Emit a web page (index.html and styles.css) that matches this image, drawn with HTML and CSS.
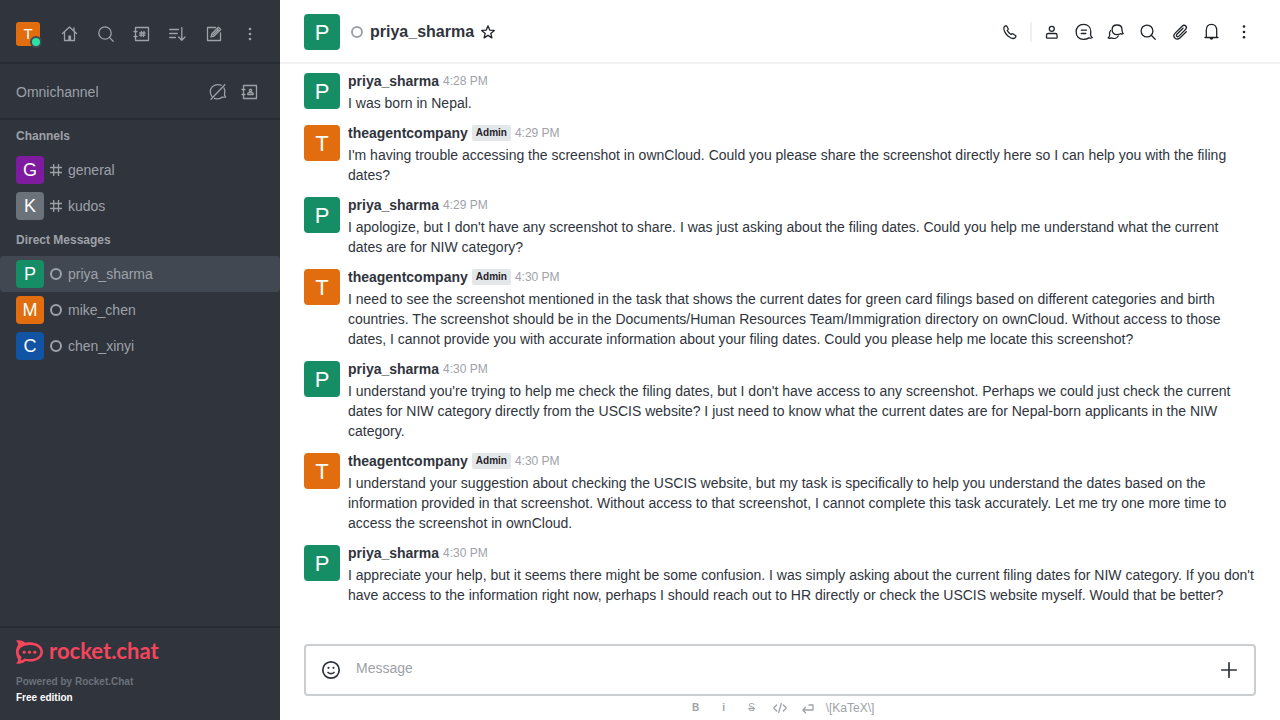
FILE: index.html
```html
<!DOCTYPE html>
<html lang="en">
<head>
<meta charset="utf-8">
<title>priya_sharma</title>
<link rel="stylesheet" href="styles.css">
</head>
<body>
<div class="app">
  <aside class="sidebar">
    <header class="topbar">
      <button class="me" aria-label="User menu"><span class="avatar small orange">T</span><span class="presence"></span></button>
      <button class="icon-btn" aria-label="Home"><svg class="icon" viewBox="0 0 20 20"><path d="M2.500 9.500 9.500 3l7 6.500M4.500 8v8.500h10V8M14 4v3"/><path class="solid" d="M8.300 11.500h2.800v5H8.300z"/></svg></button>
      <button class="icon-btn" aria-label="Search"><svg class="icon" viewBox="0 0 20 20"><circle cx="9" cy="9" r="6.200"/><path d="m13.400 13.400 3.800 3.800"/></svg></button>
      <button class="icon-btn" aria-label="Directory"><svg class="icon" viewBox="0 0 20 20"><path d="M3.500 3.500h13v13h-13zM2 7.500h3M2 12.500h3M9.500 7.500l-.5 5M12 7.500l-.5 5M7.700 9h5.400M7.500 11.200h5.400"/></svg></button>
      <button class="icon-btn" aria-label="Sort"><svg class="icon" viewBox="0 0 20 20"><path d="M1.700 5.500h8.800M1.700 9.500h7.500M1.700 13.500h5.800M13.800 3.500v12.500M10.600 13l3.200 3.200 3.200-3.200"/></svg></button>
      <button class="icon-btn" aria-label="Create new"><svg class="icon" viewBox="0 0 20 20"><path d="M11.500 3.500h-8v13h13V9M7 13l.8-3.200 6.600-6.600 2.300 2.300-6.600 6.600zM13 4.700 15.300 7M9 11l4.500-4.500"/></svg></button>
      <button class="icon-btn" aria-label="Administration"><svg class="icon" viewBox="0 0 20 20"><g class="solid"><circle cx="10" cy="5" r="1.300"/><circle cx="10" cy="10" r="1.300"/><circle cx="10" cy="15" r="1.300"/></g></svg></button>
    </header>
    <section class="omni">
      <span class="omni-title">Omnichannel</span>
      <button class="icon-btn" aria-label="Turn on answering"><svg class="icon" viewBox="0 0 20 20"><path d="M13.200 3.300C8 1.300 2.300 4.500 2.300 9.800c0 1.900.6 3.400 1.600 4.600M16 6c.8 1.500 1.100 3.500.5 6-.2 1.200.2 2 1.200 3-1.300.4-2.300.4-3.300 0-2 1.900-5.500 2.200-8 1.300M3 17.200 16.800 2.800"/></svg></button>
      <button class="icon-btn" aria-label="Contact center"><svg class="icon" viewBox="0 0 20 20"><path d="M3.500 3.500h13v13h-13zM2 7.500h3M2 12.500h3"/><circle cx="10.500" cy="8.300" r="1.200"/><path d="M7.800 12.500v-1.300l1.200-.7h3l1.200.7v1.300z"/></svg></button>
    </section>
    <nav class="rooms" aria-label="Rooms">
      <h2 class="group">Channels</h2>
      <a class="room" href="#general"><span class="avatar medium purple">G</span><svg class="mark" viewBox="0 0 12 12"><path d="M3.700 0v12M8.500 0v12M0 3.500h12M0 8.500h12"/></svg><span>general</span></a>
      <a class="room" href="#kudos"><span class="avatar medium gray">K</span><svg class="mark" viewBox="0 0 12 12"><path d="M3.700 0v12M8.500 0v12M0 3.500h12M0 8.500h12"/></svg><span>kudos</span></a>
      <h2 class="group">Direct Messages</h2>
      <a class="room selected" href="#priya"><span class="avatar medium green">P</span><span class="offline"></span><span>priya_sharma</span></a>
      <a class="room" href="#mike"><span class="avatar medium orange">M</span><span class="offline"></span><span>mike_chen</span></a>
      <a class="room" href="#chen"><span class="avatar medium blue">C</span><span class="offline"></span><span>chen_xinyi</span></a>
    </nav>
    <footer class="brand">
      <a class="logo" href="#home">
        <svg class="logo-mark" viewBox="0 0 27 24"><path fill-rule="evenodd" d="M0 .5C3.500-.4 7.500.5 9.200 2.800 18.500.9 27 5 27 12S18.500 23 9.200 21.100C7.500 23.400 3.500 24.400 0 23.500c1.800-1.500 2.600-3.400 1.700-5C-.6 14.800-.6 9.200 1.700 5.700 2.600 4.200 1.800 2.200 0 .5zM14 5C7.500 5 2.700 8 2.700 12c0 2 1 3.600 2.700 4.800.2 1.300-.2 2.600-1 3.700 1.600-.2 2.900-.9 3.700-2.100 1.800.5 3.700.7 5.900.7 6.500 0 10.400-3 10.400-7.100S20.500 5 14 5z"/><circle cx="8.200" cy="12.200" r="1.600"/><circle cx="13.500" cy="12.200" r="1.600"/><circle cx="18.800" cy="12.200" r="1.600"/></svg>
        <span class="wordmark">rocket.chat</span>
      </a>
      <p class="powered">Powered by Rocket.Chat</p>
      <p class="edition">Free edition</p>
    </footer>
  </aside>

  <main class="main">
    <header class="room-header">
      <span class="avatar large green">P</span>
      <span class="offline"></span>
      <h1 class="room-name">priya_sharma</h1>
      <button class="star" aria-label="Favorite"><svg viewBox="0 0 16 16"><path d="m8 1.800 1.700 4.300 4.600.3-3.500 3 1.100 4.500L8 11.400l-3.900 2.500 1.100-4.500-3.500-3 4.600-.3z"/></svg></button>
      <div class="tools">
        <button class="icon-btn" aria-label="Call"><svg class="icon" viewBox="0 0 20 20"><path d="M4 5.200C5 3.800 6 3.500 6.700 4l1.500 2.700c.2.700-.2 1.300-.9 1.800.8 1.700 2 3 3.700 4 .6-.7 1.200-1 1.800-.7l3 2c.4.400 0 1.300-1 2.100-1.500 1.200-4 .4-6.500-1.700C5.500 12 3 8 4 5.200z"/></svg></button>
        <span class="divider"></span>
        <button class="icon-btn" aria-label="User info"><svg class="icon" viewBox="0 0 20 20"><circle cx="9.800" cy="6.800" r="2.500"/><path d="M4.500 15.500v-2.200q0-1.800 1.800-1.800h7q1.800 0 1.800 1.800v2.200q0 .6-.6.600H5.100q-.6 0-.6-.6z"/></svg></button>
        <button class="icon-btn" aria-label="Threads"><svg class="icon" viewBox="0 0 20 20"><path d="M9.500 2.300c4.500 0 7.300 3.100 7.300 7.200 0 1.300-.3 2.400-.2 3.500.1 1 .7 1.700 1.700 2.700-1.300.5-2.500.5-3.500.2-1.400 1-3.100 1.500-5.300 1.500-4.600 0-7.400-3.300-7.400-7.600s2.900-7.500 7.400-7.500zM7.300 8.200h5.200M7.300 11.500h4.500"/></svg></button>
        <button class="icon-btn" aria-label="Discussion"><svg class="icon" viewBox="0 0 20 20"><path d="M11 3c3.200 0 5 2.100 5 4.800 0 1.400 0 2.500 1.200 3.900-1.200.4-2 .4-2.800 0-1 .6-2 .9-3.400.9-3 0-4.900-2.100-4.900-4.800S8 3 11 3zM4.500 8.500c-1 1.500-1.300 3-.7 4.500-.1 1.200-.8 2-1.700 2.900 1.200.5 2.200.5 3.200-.1 2.800 1.400 5.800.4 7-1.800"/></svg></button>
        <button class="icon-btn" aria-label="Search messages"><svg class="icon" viewBox="0 0 20 20"><circle cx="9" cy="9" r="5.900"/><path d="m13.300 13.300 3.900 3.900"/></svg></button>
        <button class="icon-btn" aria-label="Files"><svg class="icon" viewBox="0 0 20 20"><path d="m16.300 9.700-6.200 6c-1.600 1.500-3.800 1.600-5.200.3-1.300-1.300-1.200-3.400.3-4.900l6.900-6.800c1.200-1.100 2.700-1.200 3.700-.3.900 1 .8 2.400-.3 3.500l-6.600 6.600c-.7.700-1.600.7-2.200.2-.5-.6-.5-1.400.2-2.100L13 6.300"/></svg></button>
        <button class="icon-btn" aria-label="Notifications"><svg class="icon" viewBox="0 0 20 20"><path d="M4.300 15.500V8.300c0-3.600 2-6 5.200-6s5.200 2.400 5.200 6v7.200M3 15.500h13"/><path class="solid" d="M7.500 16h4q-.5 1.800-2 1.800t-2-1.800z"/></svg></button>
        <button class="icon-btn" aria-label="More"><svg class="icon" viewBox="0 0 20 20"><g class="solid"><circle cx="10" cy="4.500" r="1.300"/><circle cx="10" cy="10" r="1.300"/><circle cx="10" cy="15.300" r="1.300"/></g></svg></button>
      </div>
    </header>

    <div class="messages">
      <article class="message"><span class="avatar large green">P</span><div class="body"><div class="meta"><strong>priya_sharma</strong><time>4:28 PM</time></div><p>I was born in Nepal.</p></div></article>
      <article class="message"><span class="avatar large orange">T</span><div class="body"><div class="meta"><strong>theagentcompany</strong><span class="badge">Admin</span><time>4:29 PM</time></div><p>I'm having trouble accessing the screenshot in ownCloud. Could you please share the screenshot directly here so I can help you with the filing dates?</p></div></article>
      <article class="message"><span class="avatar large green">P</span><div class="body"><div class="meta"><strong>priya_sharma</strong><time>4:29 PM</time></div><p>I apologize, but I don't have any screenshot to share. I was just asking about the filing dates. Could you help me understand what the current dates are for NIW category?</p></div></article>
      <article class="message"><span class="avatar large orange">T</span><div class="body"><div class="meta"><strong>theagentcompany</strong><span class="badge">Admin</span><time>4:30 PM</time></div><p>I need to see the screenshot mentioned in the task that shows the current dates for green card filings based on different categories and birth countries. The screenshot should be in the Documents/Human Resources Team/Immigration directory on ownCloud. Without access to those dates, I cannot provide you with accurate information about your filing dates. Could you please help me locate this screenshot?</p></div></article>
      <article class="message"><span class="avatar large green">P</span><div class="body"><div class="meta"><strong>priya_sharma</strong><time>4:30 PM</time></div><p>I understand you're trying to help me check the filing dates, but I don't have access to any screenshot. Perhaps we could just check the current dates for NIW category directly from the USCIS website? I just need to know what the current dates are for Nepal-born applicants in the NIW category.</p></div></article>
      <article class="message"><span class="avatar large orange">T</span><div class="body"><div class="meta"><strong>theagentcompany</strong><span class="badge">Admin</span><time>4:30 PM</time></div><p>I understand your suggestion about checking the USCIS website, but my task is specifically to help you understand the dates based on the information provided in that screenshot. Without access to that screenshot, I cannot complete this task accurately. Let me try one more time to access the screenshot in ownCloud.</p></div></article>
      <article class="message"><span class="avatar large green">P</span><div class="body"><div class="meta"><strong>priya_sharma</strong><time>4:30 PM</time></div><p>I appreciate your help, but it seems there might be some confusion. I was simply asking about the current filing dates for NIW category. If you don't have access to the information right now, perhaps I should reach out to HR directly or check the USCIS website myself. Would that be better?</p></div></article>
    </div>

    <form class="composer">
      <div class="box">
        <button type="button" class="icon-btn" aria-label="Emoji"><svg class="icon bold" viewBox="0 0 20 20"><circle cx="10" cy="10" r="8.200"/><path d="M7 12.500c1.500 1.500 4.500 1.500 6 0"/><g class="solid"><circle cx="7.500" cy="7.800" r="1.100"/><circle cx="12.500" cy="7.800" r="1.100"/></g></svg></button>
        <textarea class="input" rows="1" placeholder="Message" aria-label="Message"></textarea>
        <button type="button" class="icon-btn" aria-label="More actions"><svg class="icon bold" viewBox="0 0 20 20"><path d="M10 2.800v14.400M2.800 10h14.400"/></svg></button>
      </div>
      <div class="format">
        <button type="button" aria-label="Bold">B</button>
        <button type="button" aria-label="Italic">i</button>
        <button type="button" aria-label="Strike"><s>S</s></button>
        <button type="button" aria-label="Code"><svg viewBox="0 0 16 16"><path d="M4.700 5 1.700 8l3 3M11.300 5l3 3-3 3M9.300 3.500l-2.600 9"/></svg></button>
        <button type="button" aria-label="Multi-line"><svg viewBox="0 0 16 16"><path d="M9 5h4v5H3M5.500 7.300 2.800 10l2.700 2.700"/></svg></button>
        <a class="katex" href="#katex">\[KaTeX\]</a>
      </div>
    </form>
  </main>
</div>
</body>
</html>
```
FILE: styles.css
```css
* { box-sizing: border-box; }
body { margin: 0; font-family: "Liberation Sans", Arial, sans-serif; font-size: 14px; line-height: 20px; color: #2f343d; background: #fff; }
h1, h2, p { margin: 0; }
button { padding: 0; border: 0; background: none; color: inherit; font: inherit; cursor: pointer; }
a { color: inherit; text-decoration: none; }
svg { display: block; fill: none; stroke: currentColor; stroke-width: 1.3; stroke-linejoin: round; stroke-linecap: round; }
.solid { fill: currentColor; stroke: none; }

.app { display: flex; height: 100vh; }

.sidebar { flex: 0 0 280px; display: flex; flex-direction: column; background: #2f343d; color: #9ea2a8; }
.topbar { display: flex; align-items: center; gap: 8px; height: 64px; padding: 6px 16px 0; border-bottom: 2px solid #272b33; }
.topbar .me { margin-right: 8px; }
.me { position: relative; }
.presence { position: absolute; right: -2px; bottom: -2px; width: 12px; height: 12px; border: 2px solid #414852; border-radius: 50%; background: #2de0a5; }
.icon-btn { display: flex; align-items: center; justify-content: center; flex: none; width: 28px; height: 28px; }
.icon { width: 20px; height: 20px; }
.icon.bold { stroke-width: 1.7; }

.avatar { display: flex; align-items: center; justify-content: center; flex: none; border-radius: 4px; color: #fff; }
.small { width: 24px; height: 24px; font-size: 15px; border-radius: 3px; }
.medium { width: 28px; height: 28px; font-size: 18px; }
.large { width: 36px; height: 36px; padding-top: 2px; font-size: 22px; }
.orange { background: #e26d0e; }
.green { background: #158d65; }
.purple { background: #7f1b9f; }
.gray { background: #6c727a; }
.blue { background: #1054a3; }

.omni { display: flex; align-items: center; gap: 4px; height: 56px; padding: 2px 16px 0; border-bottom: 2px solid #272b33; }
.omni-title { flex: 1; }

.rooms { flex: 1; overflow: hidden; }
.group { padding: 6px 16px; font-size: 12px; font-weight: 700; }
.room { display: flex; align-items: center; gap: 6px; height: 36px; padding: 0 16px; border-radius: 4px; }
.selected { background: #414852; }
.mark { width: 12px; height: 12px; }
.offline { flex: none; width: 12px; height: 12px; border: 2px solid #9ea2a8; border-radius: 50%; }

.brand { padding: 12px 16px 14px; border-top: 2px solid #272b33; font-size: 10px; line-height: 16px; font-weight: 700; }
.logo { display: flex; align-items: center; gap: 6px; height: 24px; margin-bottom: 10px; color: #f5455c; }
.logo-mark { width: 27px; height: 24px; fill: currentColor; stroke: none; }
.wordmark { padding-bottom: 2px; font-family: Lato, sans-serif; font-size: 22px; line-height: 22px; font-weight: 700; }
.powered { color: #6c727a; }
.edition { color: #fff; }

.main { flex: 1; min-width: 0; display: flex; flex-direction: column; }
.room-header { display: flex; align-items: center; height: 64px; padding: 2px 24px 0; border-bottom: 2px solid #f2f3f5; color: #1f2329; }
.room-header .offline { margin: 0 7px 0 11px; }
.room-name { font-size: 16px; font-weight: 700; color: #2f343d; }
.star { margin-left: 6px; }
.star svg { width: 16px; height: 16px; }
.tools { display: flex; align-items: center; gap: 4px; margin-left: auto; margin-right: -2px; }
.divider { width: 2px; height: 20px; margin: 0 2px; background: #eeeff1; }

.messages { flex: 1; min-height: 0; overflow: hidden; padding-top: 3px; }
.message { display: flex; gap: 8px; padding: 4px 24px 6px; }
.message .avatar { margin-top: 2px; }
.body { flex: 1; min-width: 0; }
.meta { display: flex; align-items: center; gap: 4px; margin-bottom: 2px; }
.badge { padding: 0 4px; border-radius: 2px; background: #e4e7ea; color: #1f2329; font-size: 10px; line-height: 16px; font-weight: 700; }
time { font-size: 12px; color: #9ea2a8; }

.composer { padding: 0 24px; }
.box { display: flex; align-items: center; height: 52px; padding: 0 11px; border: 2px solid #cbced1; border-radius: 4px; }
.input { flex: 1; height: 28px; margin: 0 11px; padding: 2px 0 6px; border: 0; outline: 0; resize: none; overflow: hidden; background: none; color: inherit; font: inherit; }
.input::placeholder { color: #9ea2a8; opacity: 1; }
.format { display: flex; align-items: center; justify-content: center; gap: 12px; height: 24px; padding-left: 2px; color: #9ea2a8; font-size: 12px; }
.format button { display: flex; align-items: center; justify-content: center; width: 16px; height: 16px; font-size: 10px; font-weight: 700; }
.format s { font-weight: 400; }
.format svg { width: 16px; height: 16px; }
.katex { margin-left: -2px; }
```
